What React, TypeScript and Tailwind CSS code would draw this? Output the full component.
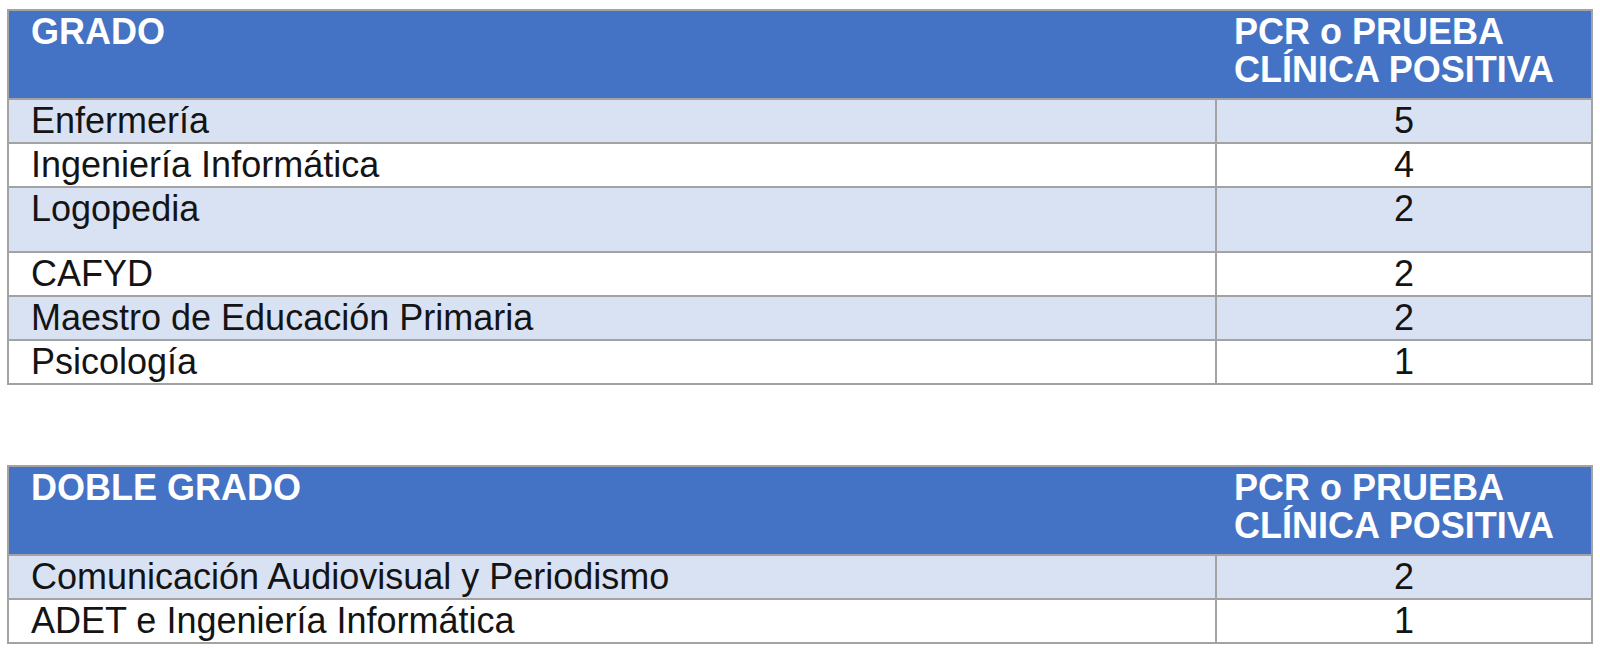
import React from 'react';

type Row = { name: string; count: number; tall?: boolean };

const grado: Row[] = [
  { name: 'Enfermería', count: 5 },
  { name: 'Ingeniería Informática', count: 4 },
  { name: 'Logopedia', count: 2, tall: true },
  { name: 'CAFYD', count: 2 },
  { name: 'Maestro de Educación Primaria', count: 2 },
  { name: 'Psicología', count: 1 },
];

const dobleGrado: Row[] = [
  { name: 'Comunicación Audiovisual y Periodismo', count: 2 },
  { name: 'ADET e Ingeniería Informática', count: 1 },
];

const CasosTable = ({ title, rows }: { title: string; rows: Row[] }) => (
  <table className="w-[1584px] border-collapse table-fixed border-2 border-[#a3a3a3]">
    <colgroup>
      <col className="w-[1208px]" />
      <col className="w-[376px]" />
    </colgroup>
    <thead>
      <tr className="h-[89px] bg-[#4472c4] text-white font-bold text-[36px] leading-[38px] align-top">
        <th className="text-left font-bold pl-[22px] pt-[2px]">{title}</th>
        <th className="text-left font-bold pl-[18px] pt-[2px]">
          PCR o PRUEBA
          <br />
          CLÍNICA POSITIVA
        </th>
      </tr>
    </thead>
    <tbody>
      {rows.map((r, i) => (
        <tr
          key={r.name}
          className={`${i % 2 === 0 ? 'bg-[#d9e2f3]' : 'bg-white'} ${r.tall ? 'h-[65px]' : 'h-[44px]'} align-top text-[36px] leading-[40px] text-[#141414]`}
        >
          <td className="border-2 border-[#a3a3a3] pl-[22px] pt-[1px]">{r.name}</td>
          <td className="border-2 border-[#a3a3a3] text-center pt-[1px]">{r.count}</td>
        </tr>
      ))}
    </tbody>
  </table>
);

export default function App() {
  return (
    <div className="w-[1600px] h-[653px] bg-white font-['Liberation_Sans',Arial,sans-serif] pl-[7px] pt-[9px] flex flex-col gap-[80px] overflow-hidden">
      <CasosTable title="GRADO" rows={grado} />
      <CasosTable title="DOBLE GRADO" rows={dobleGrado} />
    </div>
  );
}
